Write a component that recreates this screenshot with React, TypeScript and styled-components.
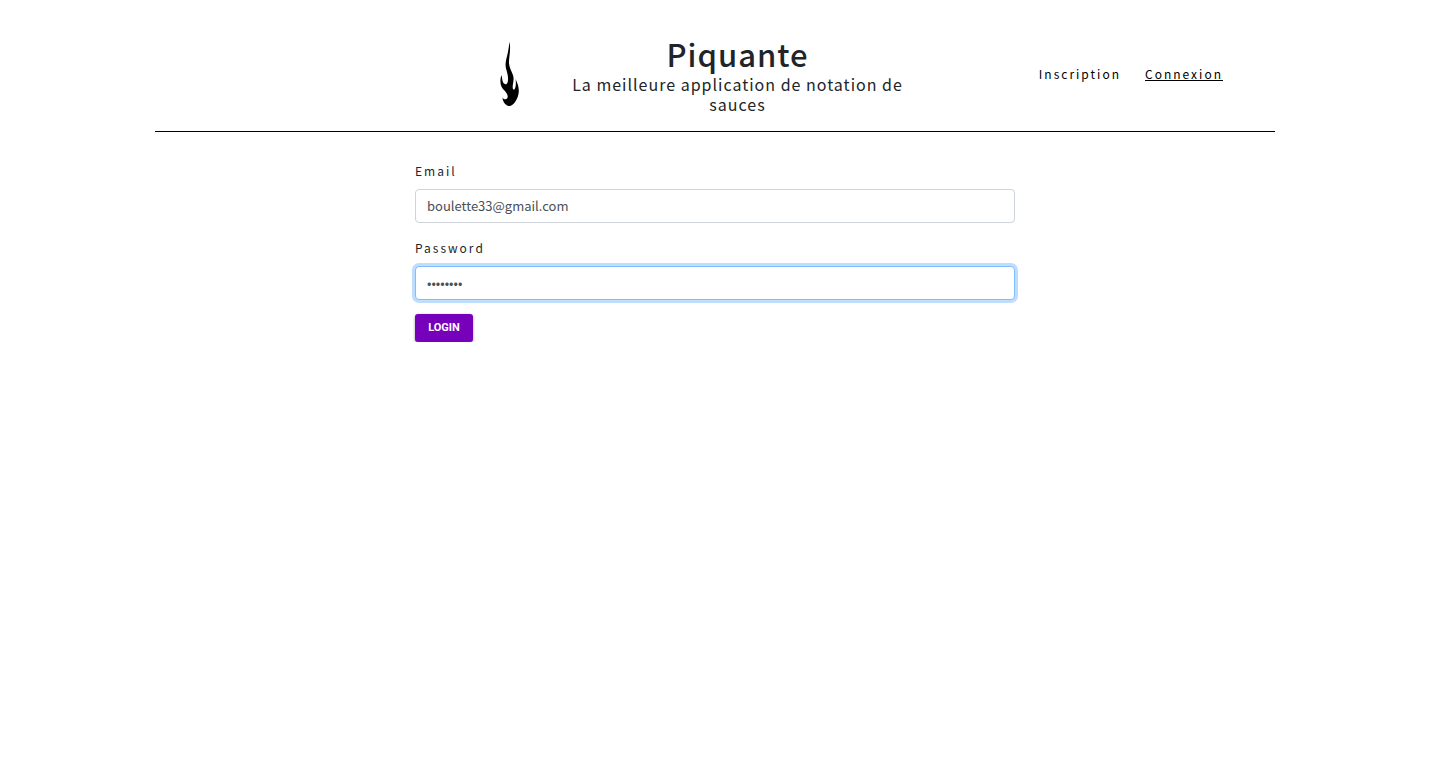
import { useState } from "react";
import styled, { createGlobalStyle } from "styled-components";

const GlobalStyle = createGlobalStyle`
  *, *::before, *::after { box-sizing: border-box; }
  body {
    margin: 0;
    padding: 0 2px 0 0;
    background: #fff;
    color: #212529;
    font-family: "Noto Sans CJK JP", "Noto Sans", sans-serif;
    font-size: 12px;
    line-height: 20px;
  }
`;

const Header = styled.header`
  display: grid;
  grid-template-columns: 396fr 373fr 351fr;
  align-items: center;
  max-width: 1120px;
  min-height: 132px;
  margin: 0 auto;
  padding-top: 17px;
  border-bottom: 1px solid #000;
`;

const Logo = styled.svg`
  justify-self: end;
  display: block;
  width: 20px;
  height: 66px;
  margin-right: 31px;
`;

const Branding = styled.div`
  text-align: center;
  letter-spacing: 1px;
`;

const Title = styled.h1`
  margin: 0;
  font-size: 31px;
  font-weight: 500;
  line-height: 40px;
`;

const Tagline = styled.p`
  margin: 0;
  padding: 0 12px;
  font-size: 16px;
  line-height: 20px;
`;

const Nav = styled.nav`
  display: flex;
  justify-content: flex-end;
  gap: 24px;
  padding-right: 52px;
  letter-spacing: 2px;
`;

const NavLink = styled.a<{ $active?: boolean }>`
  color: #000;
  text-decoration: ${(p) => (p.$active ? "underline" : "none")};
`;

const Form = styled.form`
  display: flex;
  flex-direction: column;
  align-items: stretch;
  max-width: 600px;
  margin: 28px auto 0;
`;

const Field = styled.div`
  display: flex;
  flex-direction: column;
  gap: 8px;
  margin-bottom: 14px;
`;

const Label = styled.label`
  line-height: 21px;
  letter-spacing: 2px;
`;

const Input = styled.input`
  width: 100%;
  height: 34px;
  padding: 5px 11px 7px;
  border: 1px solid #ced4da;
  border-radius: 4px;
  background: #fff;
  color: #495057;
  font: inherit;
  font-size: 13px;
  outline: 0;

  &:focus {
    border-color: #80bdff;
    box-shadow: 0 0 0 3px rgba(0, 123, 255, 0.25);
  }
`;

const SubmitButton = styled.button`
  align-self: flex-start;
  min-width: 58px;
  height: 28px;
  padding: 0 12px 2px;
  border: 0;
  border-radius: 3px;
  background: #7700bb;
  color: #fff;
  box-shadow: 0 1px 3px rgba(0, 0, 0, 0.4);
  font-family: Roboto, sans-serif;
  font-size: 11px;
  font-weight: 700;
  text-transform: uppercase;
  cursor: pointer;
`;

function Flame() {
  return (
    <Logo viewBox="60 36 60 198" aria-hidden="true">
      <path d="M89 38C86 55 85 66 81 82C76 102 75 110 80 125C84 139 86 153 82 162C79 168 72 166 69 160C66 153 67 146 64 138C60 152 60 164 65 174C70 184 82 190 83 201C84 211 75 214 67 206C69 218 77 231 89 231C98 231 105 220 110 211C117 197 118 183 114 169C112 161 109 157 107 150C108 163 108 173 104 180C101 184 98 181 98 173C99 160 103 151 99 139C95 127 88 117 87 103C86 88 93 66 89 38Z" />
    </Logo>
  );
}

export default function App() {
  const [email, setEmail] = useState("boulette33@gmail.com");
  const [password, setPassword] = useState("sauce123");

  return (
    <>
      <GlobalStyle />
      <Header>
        <Flame />
        <Branding>
          <Title>Piquante</Title>
          <Tagline>La meilleure application de notation de sauces</Tagline>
        </Branding>
        <Nav>
          <NavLink href="#signup">Inscription</NavLink>
          <NavLink href="#login" $active aria-current="page">
            Connexion
          </NavLink>
        </Nav>
      </Header>
      <main>
        <Form onSubmit={(e) => e.preventDefault()}>
          <Field>
            <Label htmlFor="email">Email</Label>
            <Input id="email" type="email" value={email} onChange={(e) => setEmail(e.target.value)} />
          </Field>
          <Field>
            <Label htmlFor="password">Password</Label>
            <Input
              id="password"
              type="password"
              autoFocus
              value={password}
              onChange={(e) => setPassword(e.target.value)}
            />
          </Field>
          <SubmitButton type="submit">Login</SubmitButton>
        </Form>
      </main>
    </>
  );
}
